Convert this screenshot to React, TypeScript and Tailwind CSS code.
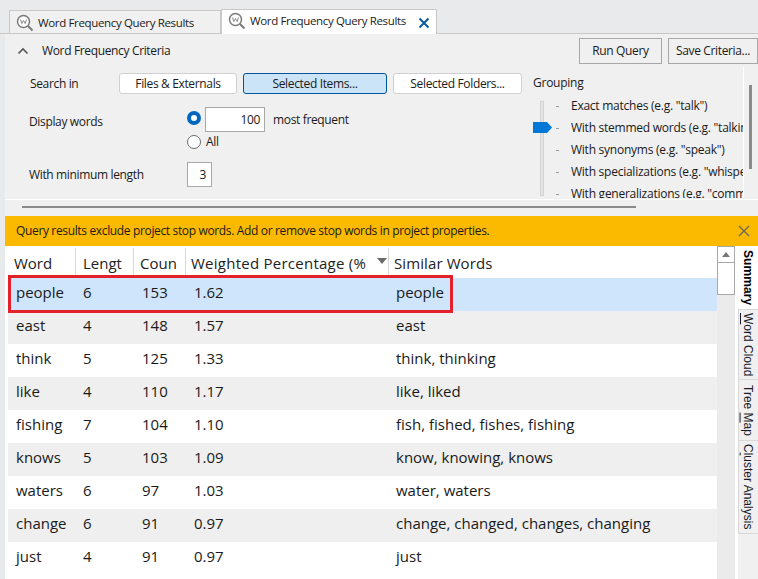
import { useState } from "react";

const rows = [
  ["people", "6", "153", "1.62", "people"],
  ["east", "4", "148", "1.57", "east"],
  ["think", "5", "125", "1.33", "think, thinking"],
  ["like", "4", "110", "1.17", "like, liked"],
  ["fishing", "7", "104", "1.10", "fish, fished, fishes, fishing"],
  ["knows", "5", "103", "1.09", "know, knowing, knows"],
  ["waters", "6", "97", "1.03", "water, waters"],
  ["change", "6", "91", "0.97", "change, changed, changes, changing"],
  ["just", "4", "91", "0.97", "just"],
];

const groupings = [
  'Exact matches (e.g. "talk")',
  'With stemmed words (e.g. "talking")',
  'With synonyms (e.g. "speak")',
  'With specializations (e.g. "whisper")',
  'With generalizations (e.g. "communicate")',
];

function QueryIcon() {
  return (
    <svg width="18" height="18" viewBox="0 0 18 18" fill="none" className="shrink-0">
      <circle cx="7.5" cy="7.5" r="6" stroke="#7a7a7a" strokeWidth="1.5" fill="#fff" />
      <path d="M12 12l4.5 4.5" stroke="#7a7a7a" strokeWidth="2" />
      <path d="M4.5 5.5l1.3 4 1.7-3 1.7 3 1.3-4" stroke="#8a8a8a" strokeWidth="1" />
    </svg>
  );
}

function Pill({ label, active, width }: { label: string; active?: boolean; width: string }) {
  return (
    <div
      className={`h-[21px] rounded-[3px] border flex items-center justify-center text-[12px] ${width} ${
        active ? "bg-[#cce4f7] border-[#005499]" : "bg-white border-[#d0d0d0]"
      }`}
    >
      {label}
    </div>
  );
}

function SideTab({ height, active, children }: { height: string; active?: boolean; children: React.ReactNode }) {
  return (
    <div
      className={`${height} flex items-center justify-center pr-[1px] border-b border-[#d9d9d9] [writing-mode:vertical-rl] font-['Liberation_Sans',sans-serif] text-[12px] ${
        active ? "font-bold bg-white text-black tracking-[0.1px]" : "bg-[#f0f0f0] text-[#1a1a2a] border-l"
      }`}
    >
      <span>{children}</span>
    </div>
  );
}

export default function App() {
  const [selected] = useState(0);

  return (
    <div className="w-[758px] h-[579px] overflow-hidden bg-[#e9eaeb] flex flex-col font-['Open_Sans','Noto_Sans',sans-serif] text-[#1a1a1a]">
      {/* tabs */}
      <div className="h-[34px] pl-[9px] flex items-end border-b border-[#c8c8c8] shrink-0 whitespace-nowrap">
        <div className="h-[23px] w-[212px] pl-[6px] pt-[1px] flex items-center gap-[4px] bg-[#f0f0f0] border border-b-0 border-[#c8c8c8] text-[11.5px] tracking-[-0.35px]">
          <QueryIcon />
          <span>Word Frequency Query Results</span>
        </div>
        <div className="h-[25px] w-[216px] pl-[6px] flex items-center gap-[4px] bg-white border border-b-0 border-[#c8c8c8] text-[11.5px] tracking-[-0.35px] mb-[-1px] pb-[3px]">
          <QueryIcon />
          <span>Word Frequency Query Results</span>
          <svg width="12" height="12" viewBox="0 0 12 12" className="ml-[8px] mt-[5px]">
            <path d="M1.5 1.5l9 9M10.5 1.5l-9 9" stroke="#0a5a9c" strokeWidth="2" />
          </svg>
        </div>
      </div>

      <div className="flex-1 ml-[5px] flex flex-col min-h-0">
        {/* criteria panel */}
        <div className="h-[182px] bg-[#f0f0f0] flex flex-col shrink-0 tracking-[-0.35px]">
          <div className="h-[33px] flex items-center shrink-0">
            <svg width="12" height="8" viewBox="0 0 12 8" className="ml-[12px]">
              <path d="M1.5 6.5L6 2l4.5 4.5" stroke="#555" strokeWidth="1.6" fill="none" />
            </svg>
            <span className="ml-[13px] text-[12px]">Word Frequency Criteria</span>
            <div className="ml-auto flex gap-[6px]">
              <div className="h-[26px] w-[83px] border border-[#a8a8a8] flex items-center justify-center text-[12px]">Run Query</div>
              <div className="h-[26px] w-[90px] border border-[#a8a8a8] flex items-center justify-center text-[12px]">Save Criteria...</div>
            </div>
          </div>

          <div className="h-[132px] flex shrink-0 overflow-hidden">
            <div className="w-[528px] pl-[24px] pt-[6px] shrink-0 text-[12px]">
              <div className="flex items-center">
                <span className="w-[90px] pl-[1px] pt-[1px]">Search in</span>
                <div className="flex gap-[6px]">
                  <Pill label="Files & Externals" width="w-[118px]" />
                  <Pill label="Selected Items..." active width="w-[144px]" />
                  <Pill label="Selected Folders..." width="w-[129px]" />
                </div>
              </div>
              <div className="flex mt-[13px]">
                <span className="w-[158px] pt-[6px]">Display words</span>
                <div>
                  <div className="flex items-center">
                    <div className="w-[14px] h-[14px] mb-[3px] rounded-full border-[4px] border-[#0067c0] bg-white" />
                    <div className="ml-[4px] w-[60px] h-[25px] border border-[#a8a8a8] bg-white text-right pr-[4px] leading-[23px]">100</div>
                    <span className="ml-[8px]">most frequent</span>
                  </div>
                  <div className="flex items-center mt-[1px]">
                    <div className="w-[14px] h-[14px] rounded-full border border-[#6a6a6a] bg-white" />
                    <span className="ml-[5px]">All</span>
                  </div>
                </div>
              </div>
              <div className="flex items-center mt-[11px]">
                <span className="w-[158px] pt-[1px]">With minimum length</span>
                <div className="w-[25px] h-[25px] border border-[#a8a8a8] bg-white text-right pr-[5px] leading-[23px]">3</div>
              </div>
            </div>

            <div className="flex-1 flex min-w-0">
              <div className="w-[211px] h-[131px] border-r border-white overflow-hidden text-[12px] tracking-[-0.25px] pt-[7px]">
                <div className="h-[18px] whitespace-nowrap">Grouping</div>
                <div className="flex mt-[3px]">
                  <div className="relative w-[38px] shrink-0">
                    <div className="ml-[7px] mt-[6px] w-[4px] h-[95px] bg-[#e3e3e3] border border-[#d4d4d4]" />
                    <svg width="20" height="11" viewBox="0 0 20 11" className="absolute left-0 top-[27px]">
                      <path d="M0 0h14l5 5.5-5 5.5H0z" fill="#0078d7" />
                    </svg>
                  </div>
                  <div className="flex flex-col whitespace-nowrap">
                    {groupings.map((g) => (
                      <div key={g} className="h-[22px] flex items-center">
                        <span className="w-[3px] h-px bg-[#999] mr-[12px] -ml-[15px]" />
                        <span>{g}</span>
                      </div>
                    ))}
                  </div>
                </div>
              </div>
              <div className="pl-[5px] pt-[18px]">
                <div className="w-[3px] h-[84px] bg-[#8a8a8a]" />
              </div>
            </div>
          </div>

          <div className="flex-1 border-t border-white pl-[17px] pt-[6px]">
            <div className="w-[614px] h-[2px] bg-[#8a8a8a]" />
          </div>
        </div>

        {/* stop words notice */}
        <div className="h-[30px] bg-[#fbb900] flex items-center pl-[11px] pr-[8px] text-[12px] tracking-[-0.35px] shrink-0">
          <span>Query results exclude project stop words. Add or remove stop words in project properties.</span>
          <svg width="12" height="12" viewBox="0 0 12 12" className="ml-auto">
            <path d="M1 1l10 10M11 1L1 11" stroke="#6b6b5a" strokeWidth="1.4" />
          </svg>
        </div>

        {/* results */}
        <div className="flex-1 flex min-h-0 bg-white">
          <div className="w-[712px] pl-[3px] pt-[2px] shrink-0 text-[15px] relative">
            <div className="grid grid-cols-[67px_58px_52px_203px_1fr] h-[30px] text-[#222]">
              <div className="pl-[6px] flex items-center">Word</div>
              <div className="pl-[7px] pt-[1px] flex items-center border-l border-[#d8d8d8]">Lengt</div>
              <div className="pl-[6px] pt-[1px] flex items-center border-l border-[#d8d8d8]">Coun</div>
              <div className="pl-[5px] pt-[1px] flex items-center border-l border-[#d8d8d8] relative overflow-hidden whitespace-nowrap tracking-[0.25px]">
                Weighted Percentage (%
                <svg width="10" height="6" viewBox="0 0 10 6" className="absolute right-[1px] top-[10px]">
                  <path d="M0 0h10L5 6z" fill="#6a6a6a" />
                </svg>
              </div>
              <div className="pl-[5px] flex items-center border-l border-[#d8d8d8] tracking-[0.1px]">Similar Words</div>
            </div>
            {rows.map((r, i) => (
              <div
                key={r[0]}
                className={`grid grid-cols-[67px_58px_52px_203px_1fr] h-[33px] pb-[4px] items-center ${
                  i === selected ? "bg-[#cfe5fc]" : i % 2 === 1 ? "bg-[#efefef]" : "bg-white"
                }`}
              >
                <span className="pl-[8px]">{r[0]}</span>
                <span className="pl-[8px]">{r[1]}</span>
                <span className="pl-[9px]">{r[2]}</span>
                <span className="pl-[9px]">{r[3]}</span>
                <span className="pl-[8px]">{r[4]}</span>
              </div>
            ))}
            {/* red annotation */}
            <div className="absolute left-[3px] top-[29px] w-[445px] h-[38px] border-[3px] border-[#e4202a]" />
          </div>

          <div className="w-[18px] bg-[#ebebeb] shrink-0 flex flex-col">
            <div className="h-[17px] bg-white border border-[#a8a8a8] flex items-center justify-center">
              <svg width="8" height="5" viewBox="0 0 8 5">
                <path d="M4 0l4 5H0z" fill="#777" />
              </svg>
            </div>
            <div className="h-[32px] bg-white border border-t-0 border-[#a8a8a8]" />
          </div>

          <div className="flex-1 ml-[3px] bg-[#f0f0f0] flex flex-col">
            <SideTab height="h-[64px]" active>Summary</SideTab>
            <SideTab height="h-[70px]"><u>W</u>ord Cloud</SideTab>
            <SideTab height="h-[61px]">Tree <u>M</u>ap</SideTab>
            <SideTab height="h-[93px]">C<u>l</u>uster Analysis</SideTab>
          </div>
        </div>
      </div>
    </div>
  );
}
